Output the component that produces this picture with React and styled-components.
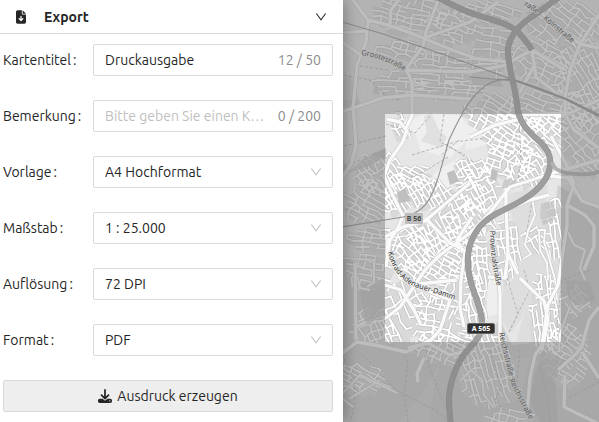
import React, { useState } from 'react';
import styled, { createGlobalStyle } from 'styled-components';
import { FaDownload, FaFileArrowDown } from 'react-icons/fa6';

const GlobalStyle = createGlobalStyle`
  * { box-sizing: border-box; }
  body {
    margin: 0;
    background: #fff;
    color: #262626;
    font-family: Ubuntu, "Noto Sans", sans-serif;
    font-size: 14px;
    line-height: 22px;
  }
  input, select, button { font: inherit; color: inherit; }
`;

const Page = styled.div`
  display: flex;
  min-height: 100vh;
`;

const Sidebar = styled.aside`
  flex: 0 0 343px;
  z-index: 1;
  background: #fff;
  box-shadow: 2px 0 14px rgba(0, 0, 0, 0.3);
`;

const PanelHeader = styled.button`
  display: flex;
  align-items: center;
  gap: 18px;
  width: 100%;
  height: 34px;
  padding: 0 16px;
  border: 0;
  border-bottom: 1px solid #d9d9d9;
  background: #fff;
  text-align: left;
  cursor: pointer;
`;

const ExportIcon = styled(FaFileArrowDown)`
  width: 10px;
  height: 14px;
`;

const PanelTitle = styled.span`
  flex: 1;
  font-weight: 700;
`;

const ExportForm = styled.form`
  display: grid;
  gap: 24px;
  padding: 10px 10px 10px 3px;
`;

const FieldRow = styled.div`
  display: grid;
  grid-template-columns: 90px minmax(0, 1fr);
  align-items: center;
`;

const FieldLabel = styled.label`
  white-space: nowrap;
  &::after {
    content: ":";
    margin-left: 2px;
  }
`;

const InputFrame = styled.div`
  display: flex;
  align-items: center;
  gap: 12px;
  height: 32px;
  padding: 0 11px;
  border: 1px solid #d9d9d9;
  border-radius: 2px;
`;

const TextInput = styled.input`
  flex: 1;
  min-width: 0;
  padding: 0;
  border: 0;
  outline: 0;
  background: transparent;
  text-overflow: ellipsis;
  &::placeholder { color: #bfbfbf; opacity: 1; }
`;

const Counter = styled.span`
  color: #8c8c8c;
  white-space: nowrap;
`;

const SelectFrame = styled.div`
  display: grid;
  align-items: center;
  & > * { grid-area: 1 / 1; }
  & > svg {
    justify-self: end;
    margin-right: 11px;
    pointer-events: none;
  }
`;

const SelectBox = styled.select`
  width: 100%;
  height: 32px;
  padding: 0 30px 0 11px;
  border: 1px solid #d9d9d9;
  border-radius: 2px;
  background: #fff;
  appearance: none;
`;

const SubmitButton = styled.button`
  display: flex;
  align-items: center;
  justify-content: center;
  gap: 5px;
  height: 32px;
  border: 1px solid #d9d9d9;
  border-radius: 2px;
  background: #eee;
  cursor: pointer;
`;

const MapPane = styled.main`
  display: flex;
  flex: 1;
  min-width: 0;
  overflow: hidden;
  background: #b0b0b0;
`;

const MapDrawing = styled.svg`
  flex: 1;
  min-width: 0;
  height: 100vh;
  font-family: "Noto Sans", sans-serif;
`;

function Chevron({ color, size }) {
  return (
    <svg width={size} height={size} viewBox="64 64 896 896" fill={color} aria-hidden="true">
      <path d="M884 256h-75c-5.1 0-9.9 2.5-12.9 6.6L512 654.2 227.9 262.6c-3-4.1-7.8-6.6-12.9-6.6h-75c-6.5 0-10.3 7.4-6.5 12.7l352.6 486.1c12.8 17.6 39 17.6 51.7 0l352.6-486.1c3.9-5.3.1-12.7-6.4-12.7z" />
    </svg>
  );
}

function CountedField({ id, label, value, max, placeholder, onChange }) {
  return (
    <FieldRow>
      <FieldLabel htmlFor={id}>{label}</FieldLabel>
      <InputFrame>
        <TextInput
          id={id}
          value={value}
          maxLength={max}
          placeholder={placeholder}
          onChange={(e) => onChange(e.target.value)}
        />
        <Counter>{value.length} / {max}</Counter>
      </InputFrame>
    </FieldRow>
  );
}

function SelectField({ id, label, options }) {
  return (
    <FieldRow>
      <FieldLabel htmlFor={id}>{label}</FieldLabel>
      <SelectFrame>
        <SelectBox id={id}>
          {options.map((o) => <option key={o}>{o}</option>)}
        </SelectBox>
        <Chevron color="#bfbfbf" size={12} />
      </SelectFrame>
    </FieldRow>
  );
}

/* Residential districts: centre x/y, radii, street angle, block width/height. */
const DISTRICTS = [
  [406, 12, 36, 20, 12, 8, 5],
  [452, 22, 26, 20, 20, 8, 5],
  [400, 48, 24, 9, 18, 8, 5],
  [440, 66, 34, 16, 6, 8, 5],
  [398, 82, 26, 14, 4, 9, 5],
  [445, 88, 34, 9, 4, 8, 4],
  [490, 50, 20, 26, 8, 8, 7],
  [485, 10, 30, 10, 20, 9, 5],
  [540, 60, 28, 24, 28, 8, 6],
  [562, 20, 38, 22, 38, 8, 6],
  [582, 78, 28, 42, 60, 8, 5],
  [552, 108, 46, 20, 20, 8, 5],
  [492, 110, 28, 18, 30, 8, 5],
  [506, 132, 24, 22, 34, 8, 5],
  [540, 130, 22, 20, 40, 7, 4],
  [590, 140, 28, 30, 50, 8, 6],
  [401, 126, 9, 14, 70, 7, 5],
  [378, 170, 22, 20, 55, 7, 5],
  [366, 200, 24, 22, 30, 8, 5],
  [410, 173, 18, 11, 28, 7, 4],
  [396, 192, 13, 20, 60, 7, 4],
  [428, 192, 20, 16, 60, 7, 4],
  [472, 172, 20, 18, 62, 7, 5],
  [510, 156, 26, 20, 20, 7, 5],
  [528, 166, 22, 20, 62, 7, 5],
  [480, 188, 22, 22, 64, 7, 5],
  [455, 202, 22, 16, 58, 7, 5],
  [475, 216, 20, 16, 60, 7, 5],
  [435, 230, 28, 20, 66, 7, 5],
  [412, 245, 19, 26, 48, 8, 5],
  [455, 243, 20, 20, 32, 8, 5],
  [430, 268, 30, 14, 30, 8, 5],
  [372, 238, 28, 12, 8, 8, 5],
  [365, 268, 20, 18, 12, 9, 7],
  [405, 310, 20, 32, 66, 9, 8],
  [435, 315, 24, 26, 10, 8, 6],
  [454, 288, 20, 20, 14, 8, 6],
  [440, 344, 28, 16, 28, 7, 5],
  [374, 323, 20, 18, 66, 8, 5],
  [482, 255, 11, 34, 84, 7, 5],
  [508, 246, 11, 34, 82, 8, 5],
  [535, 236, 12, 14, 55, 8, 6],
  [554, 225, 8, 32, 80, 8, 5],
  [545, 310, 14, 40, 84, 7, 4],
  [476, 300, 10, 40, 75, 7, 5],
  [486, 366, 28, 36, 72, 8, 5],
  [565, 353, 22, 32, 38, 7, 5],
  [358, 376, 27, 14, 28, 8, 5],
  [509, 416, 24, 9, 10, 8, 6],
  [575, 298, 12, 15, 50, 8, 5],
];

const noise = (a, b) => {
  const s = Math.sin(a * 127.1 + b * 311.7) * 43758.5453;
  return s - Math.floor(s);
};

function buildDistrict([cx, cy, rx, ry, angle, bw, bh], seed) {
  const rad = (angle * Math.PI) / 180;
  const cos = Math.cos(rad);
  const sin = Math.sin(rad);
  const r = Math.max(rx, ry);
  const cols = Math.ceil(r / bw);
  const rows = Math.ceil(r / bh);
  const node = (i, j) => {
    const u = i * bw + (noise(i + seed * 13, j) - 0.5) * bw * 0.5;
    const v = j * bh + (noise(j + seed * 7, i + 40) - 0.5) * bh * 0.5;
    return [cx + u * cos - v * sin, cy + u * sin + v * cos];
  };
  const inside = ([x, y]) => ((x - cx) / rx) ** 2 + ((y - cy) / ry) ** 2 < 1;
  const f = ([x, y]) => `${x.toFixed(1)} ${y.toFixed(1)}`;
  let streets = '';
  let houses = '';
  for (let i = -cols; i <= cols; i += 1) {
    for (let j = -rows; j <= rows; j += 1) {
      const p = node(i, j);
      if (inside(p)) {
        const q = node(i + 1, j);
        const s = node(i, j + 1);
        const d = node(i + 1, j + 1);
        if (noise(i + seed, j * 3) > 0.2) streets += `M${f(p)}L${f(q)}`;
        if (noise(i * 5, j + seed) > 0.42) streets += `M${f(p)}L${f(s)}`;
        houses += `M${f(p)}L${f(q)}L${f(d)}L${f(s)}Z`;
      }
    }
  }
  return { streets, houses };
}

const BLOCKS = DISTRICTS.map(buildDistrict);
const STREETS = BLOCKS.map((b) => b.streets).join('');
const HOUSES = BLOCKS.map((b) => b.houses).join('');

const MOTORWAY = [
  'M435-4C450 4 466 12 480 16S512 25 519 33S529 45 532 50',
  'M562-5L533 16Q511 30 508 48C507 65 514 80 517 104C518 123 529 132 540 142C556 156 553 176 534 192C514 209 491 211 478 229C463 250 467 272 474 292C481 311 487 327 475 342C458 358 451 378 449 396Q449 409 451 426',
].join('');

const MAIN_ROADS = [
  'M350-4L368 20Q395 26 423 38T475 58',
  'M440-4L426 32L423 46L406 69L412 82L412 116L406 128',
  'M368 20L366 42L357 65L353 108L356 145L351 164L340 181',
  'M340 112L354 108L382 98L413 95L470 99',
  'M406 70L470 72L512 64',
  'M342 42L361 55M342 33L366 31',
  'M390 24L391 10L400-2M424 38L470 22L498 2',
  'M599 48L580 44L540 12L522-4M599 15L580 44L570 70L565 98L565 114L574 130L599 148',
  'M532 50L548 60L565 70M532 50L510 62L470 58M532 50L536 77L565 100M536 62L520 92',
  'M470 137L495 125L520 119M520 115L570 113L599 100',
  'M387 119L400 122L407 131L402 143L390 160L384 176L395 200L403 216L398 228L390 240L386 267',
  'M599 160L550 174L510 187L488 215L470 233L440 255L425 270L400 307L386 318',
  'M470 183L425 221L403 227L385 237M425 218L450 243L472 254',
  'M506 188L506 206L508 253L505 278L488 277',
  'M518 274L508 254M472 217L457 240L463 252',
  'M551 136L559 151L566 164L574 184L567 205L567 226L562 258L558 285L548 305L542 345L535 355L530 378L527 414',
  'M550 176L568 178L582 201L599 207M567 205L585 215L594 226L594 246L584 270',
  'M388 238L387 254L400 278L433 293L450 300L440 330L428 343L450 355L471 350',
  'M340 355L357 342L380 346L406 352L430 340M355 263L356 340M356 327L366 322',
  'M428 343L408 348M424 358L417 374L418 382',
  'M496 266L500 292L500 323L500 344',
  'M520 278L532 290L544 301L548 320L542 350',
  'M599 307L589 320L582 346L577 353L558 370M582 352L599 378M565 375L564 407L599 424',
  'M506 210L530 200L549 195M465 252L461 280L460 308L464 327',
  'M385 285L401 290L414 310L421 325M457 280L418 284',
].join('');

const WINDING = [
  'M532 198L535 215L528 231L525 245L531 254L523 259',
  'M537 230L545 230L544 242L549 258L555 279L557 300',
  'M539 230L540 250L547 263L548 280',
  'M568 232L574 245L585 250L580 268L585 280',
  'M570 306L560 334L559 352M590 302L580 309',
  'M343 258L374 260L374 282L367 287',
  'M370 290L360 288L356 270',
  'M343 393L360 375L397 393M349 399L380 380M343 399L353 407',
  'M461 380L471 370L482 380L484 395L494 408',
].join('');

const PATHS = [
  'M344 75L370 80L388 98L400 100M344 146L386 136M360 66L388 70',
  'M386 124L415 133L430 116M412 155L455 142L485 138M444 114L440 142L465 155',
  'M448 157L425 171L405 180M459 140L440 156M445 144L475 163',
  'M404 350L408 365L404 396L408 422M340 350L354 380L355 404L350 422',
  'M362 354L396 390L431 408L448 420M425 345L429 366L439 393L448 412',
  'M519 120L521 160L518 180M533 195L527 230M507 278L518 314L509 332',
  'M509 332L522 305L530 290L524 270M520 350L516 390L522 408',
  'M490 350L501 387L495 401L510 415M590 270L562 280L557 325L568 345',
  'M540 365L547 395L550 422M599 382L570 397M385 177L360 160L344 167',
].join('');

const LABELS = [
  { id: 'grootestrasse', d: 'M361 55Q384 58 406 72', text: 'Grootestraße' },
  { id: 'grootestrasse-nord', d: 'M524 5L545 19', text: 'raße' },
  { id: 'koelnstrasse', d: 'M543 19L578 48', text: 'Kölnstraße' },
  { id: 'provinzialstrasse', d: 'M490 231C490 246 492 267 498 290', text: 'Provinzialstraße' },
  { id: 'adenauer', d: 'M388 252Q394 281 421 289T458 301', text: 'Konrad-Adenauer-Damm' },
  { id: 'reichsstrasse-nord', d: 'M499 333L510 380', text: 'Reichsstraße' },
  { id: 'reichsstrasse-sued', d: 'M509 380L530 421', text: 'Reichsstraße' },
];

function PrintMap() {
  return (
    <MapDrawing viewBox="343 0 256 422" preserveAspectRatio="xMidYMid slice" role="img" aria-label="Kartenausschnitt">
      <rect x="343" width="256" height="422" fill="#e6e6e6" />
      <g fill="#d0d0d0">
        <path d="M343 255L385 280L400 342L450 353L477 342L500 320L512 345L542 342L564 332L555 422H343Z" />
        <path d="M535 345L558 185L599 210V422H545Z" />
        <path d="M342 80L350 75L360 102L354 112L342 108M376 75L379 94L373 94M472 74L500 80L503 87L472 84M560 47L579 40L582 60M545 60L560 48L570 55M568 103L585 93L599 88V109" />
      </g>
      <g fill="#efefef">
        <path d="M387 123L416 118L429 111L460 116L475 132L450 158L420 150L415 132L400 138ZM470 114L500 132L485 145L465 150ZM488 278L496 276L498 313L486 318ZM493 187L473 213L463 190L492 155ZM421 185L439 170L459 158L470 166L455 183L438 195Z" />
        <path d="M343 45L364 40L370 58L365 100H343Z" opacity=".35" />
      </g>
      <g fill="#dedede">
        <path d="M508 194L548 185L544 215L558 235L560 310L541 342H516L525 310L512 282L518 250Z" />
        <path d="M505 278L530 292L522 318L510 333L500 318Z" />
        <path d="M438 366Q444 356 436 377L429 422H400L424 390ZM474 365L530 357L520 400L484 410Z" opacity=".4" />
      </g>
      <path d="M424 116L431 112L439 130L447 137L441 148L421 141L427 132Z" fill="#e0e0e0" />

      <path d={HOUSES} fill="#d9d9d9" />
      <path d={STREETS} fill="none" stroke="#bababa" strokeWidth="3" strokeLinejoin="round" />
      <path d={STREETS} fill="none" stroke="#fff" strokeWidth="1.8" strokeLinecap="round" />
      <g fill="#bfbfbf">
        <path d="M370 155L386 148V159ZM397 193L405 188L411 201L399 203ZM447 173L454 170L459 181L450 185ZM492 169L498 171L496 181L490 179Z" />
        <path d="M342 158L350 171L364 158L386 150L384 158L370 166L343 174ZM541 204L551 201L557 212L553 221L543 225L540 216ZM542 350L565 360L555 380L558 422H540L529 399ZM565 280L590 282L595 300L579 306L569 300ZM359 285L384 279L385 315L365 322ZM516 180L514 187L501 189L504 180Z" opacity=".65" />
      </g>
      <path d={PATHS} fill="none" stroke="#b4b4b4" strokeWidth="1" strokeDasharray="3 2" />
      <path d={WINDING} fill="none" stroke="#c4c4c4" strokeWidth="3" strokeLinejoin="round" />
      <path d={WINDING} fill="none" stroke="#fafafa" strokeWidth="2" strokeLinejoin="round" />
      <path d={MAIN_ROADS} fill="none" stroke="#c6c6c6" strokeWidth="4.4" strokeLinejoin="round" />
      <path d={MAIN_ROADS} fill="none" stroke="#fafafa" strokeWidth="3.4" strokeLinejoin="round" />

      <g fill="none" stroke="#929292">
        <path d="M342 22L380 33L425 48L470 64L511 79L565 99L599 114M342 227L403 217C434 212 437 180 449 140C462 112 473 91 492 82Q503 78 514 80M470 77L515 81" strokeWidth="1.1" />
        <path d="M514 80L540 89L566 99L599 116" strokeWidth="2.2" />
      </g>
      <path d={MOTORWAY} fill="none" stroke="#909090" strokeWidth="6" />
      <path d={MOTORWAY} fill="none" stroke="#9e9e9e" strokeWidth="5" />
      <path d="M552 162Q554 173 576 174T599 170" fill="none" stroke="#b0b0b0" strokeWidth="4" />

      {LABELS.map((l) => (
        <g key={l.id} fontSize="7.4" fill="#333" stroke="#eaeaea" strokeWidth="1.4" paintOrder="stroke">
          <path id={l.id} d={l.d} fill="none" stroke="none" />
          <text><textPath href={`#${l.id}`}>{l.text}</textPath></text>
        </g>
      ))}

      <rect x="405" y="213" width="18" height="11" rx="1" fill="#bdbdbd" />
      <text x="414" y="221" textAnchor="middle" fontSize="7" fontWeight="600" fill="#333">B 56</text>

      <path fillRule="evenodd" fill="#7f7f7f" fillOpacity=".5" d="M343 0H599V422H343ZM385 114V342H561V114Z" />

      <rect x="467" y="323" width="28" height="11" rx="2" fill="#303030" stroke="#ddd" strokeWidth=".6" />
      <text x="481" y="331" textAnchor="middle" fontSize="7" fontWeight="700" fill="#fff">A 565</text>
    </MapDrawing>
  );
}

export default function App() {
  const [open, setOpen] = useState(true);
  const [title, setTitle] = useState('Druckausgabe');
  const [remark, setRemark] = useState('');

  return (
    <Page>
      <GlobalStyle />
      <Sidebar>
        <PanelHeader type="button" aria-expanded={open} onClick={() => setOpen(!open)}>
          <ExportIcon aria-hidden="true" />
          <PanelTitle>Export</PanelTitle>
          <Chevron color="#262626" size={12} />
        </PanelHeader>
        {open && (
          <ExportForm onSubmit={(e) => e.preventDefault()}>
            <CountedField id="title" label="Kartentitel" value={title} max={50} onChange={setTitle} />
            <CountedField
              id="remark"
              label="Bemerkung"
              value={remark}
              max={200}
              placeholder="Bitte geben Sie einen Kommentar ein"
              onChange={setRemark}
            />
            <SelectField id="template" label="Vorlage" options={['A4 Hochformat', 'A4 Querformat']} />
            <SelectField id="scale" label="Maßstab" options={['1 : 25.000', '1 : 50.000']} />
            <SelectField id="resolution" label="Auflösung" options={['72 DPI', '150 DPI']} />
            <SelectField id="format" label="Format" options={['PDF', 'PNG']} />
            <SubmitButton type="submit">
              <FaDownload size={14} aria-hidden="true" />
              Ausdruck erzeugen
            </SubmitButton>
          </ExportForm>
        )}
      </Sidebar>
      <MapPane>
        <PrintMap />
      </MapPane>
    </Page>
  );
}
